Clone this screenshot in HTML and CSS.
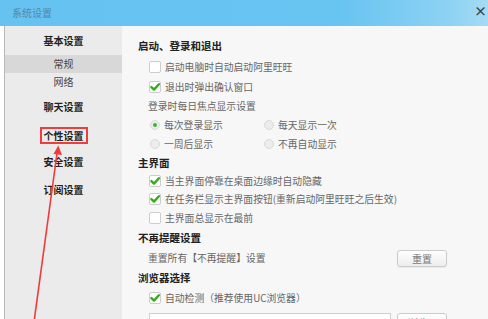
FILE: index.html
```html
<!DOCTYPE html>
<html lang="zh-CN">
<head>
<meta charset="utf-8">
<title>系统设置</title>
<link rel="stylesheet" href="styles.css">
</head>
<body>
<div class="window">
  <header class="titlebar">
    <span class="title">系统设置</span>
    <span class="close">×</span>
  </header>
  <div class="main">
    <div class="gutter"></div>
    <nav class="sidebar">
      <div class="nav-head first">基本设置</div>
      <div class="nav-sub active">常规</div>
      <div class="nav-sub short">网络</div>
      <div class="nav-head chat">聊天设置</div>
      <div class="nav-head"><span class="marked">个性设置</span></div>
      <div class="nav-head">安全设置</div>
      <div class="nav-head">订阅设置</div>
    </nav>
    <section class="content">
      <div class="sec">启动、登录和退出</div>
      <div class="row tall"><span class="cb"></span>启动电脑时自动启动阿里旺旺</div>
      <div class="row"><span class="cb on"><svg viewBox="0 0 12 12"><path d="M2.4 6.1 L5 8.6 L9.9 3.2"/></svg></span>退出时弹出确认窗口</div>
      <div class="row label">登录时每日焦点显示设置</div>
      <div class="row radios">
        <span class="ropt"><span class="rd on"></span>每次登录显示</span>
        <span class="ropt"><span class="rd"></span>每天显示一次</span>
      </div>
      <div class="row radios">
        <span class="ropt"><span class="rd"></span>一周后显示</span>
        <span class="ropt"><span class="rd"></span>不再自动显示</span>
      </div>

      <div class="sec s19">主界面</div>
      <div class="row tight"><span class="cb on"><svg viewBox="0 0 12 12"><path d="M2.4 6.1 L5 8.6 L9.9 3.2"/></svg></span>当主界面停靠在桌面边缘时自动隐藏</div>
      <div class="row tight"><span class="cb on"><svg viewBox="0 0 12 12"><path d="M2.4 6.1 L5 8.6 L9.9 3.2"/></svg></span>在任务栏显示主界面按钮(重新启动阿里旺旺之后生效)</div>
      <div class="row loose"><span class="cb"></span>主界面总显示在最前</div>

      <div class="sec">不再提醒设置</div>
      <div class="row loose reset"><span class="label-text">重置所有【不再提醒】设置</span><button class="btn">重置</button></div>

      <div class="sec">浏览器选择</div>
      <div class="row"><span class="cb on"><svg viewBox="0 0 12 12"><path d="M2.4 6.1 L5 8.6 L9.9 3.2"/></svg></span>自动检测（推荐使用UC浏览器）</div>
      <div class="pick">
        <div class="field"></div>
        <button class="btn">浏览...</button>
      </div>
    </section>
  </div>
  <svg class="annot" viewBox="0 0 488 319" width="488" height="319">
    <line x1="57.2" y1="152" x2="34" y2="322" stroke="#f23a3a" stroke-width="1.6"/>
    <polygon points="58.3,145.5 62,155 53.5,154" fill="#f23a3a"/>
  </svg>
</div>
</body>
</html>
```

FILE: styles.css
```css
* { box-sizing: border-box; }
html, body { margin: 0; padding: 0; }
body {
  width: 488px;
  height: 319px;
  overflow: hidden;
  background: #ffffff;
  font-family: "Noto Sans CJK SC", "Noto Sans", sans-serif;
  font-size: 10px;
  color: #666;
}
.window {
  position: relative;
  width: 488px;
  height: 319px;
  overflow: hidden;
  display: flex;
  flex-direction: column;
}
.titlebar {
  height: 26px;
  flex: none;
  display: flex;
  align-items: center;
  justify-content: space-between;
  padding-left: 12px;
  padding-right: 1px;
  background: linear-gradient(90deg, #66c3f1 0%, #68c4f1 70%, #8dd2f3 92%, #a5dbf4 100%);
}
.title {
  font-size: 10px;
  color: #4f88ad;
  line-height: 12px;
  margin-top: -1px;
}
.close {
  font-size: 13px;
  font-weight: bold;
  color: #3a4550;
  line-height: 14px;
  margin-top: -5px;
  white-space: nowrap;
}
.main {
  flex: 1;
  display: flex;
  min-height: 0;
}
.gutter {
  width: 5px;
  flex: none;
  background: #fff;
  border-right: 1px solid #b9b9b9;
}
.sidebar {
  width: 117px;
  flex: none;
  background: #ebebeb;
  padding-top: 5px;
  display: flex;
  flex-direction: column;
}
.nav-head {
  height: 20px;
  line-height: 20px;
  margin-top: 7.5px;
  text-align: center;
  font-weight: bold;
  color: #222;
  font-size: 10px;
}
.nav-head.first { margin-top: 0; }
.nav-head.chat { margin-top: 7px; }
.nav-sub {
  height: 18px;
  line-height: 18px;
  text-align: center;
  color: #444;
  font-size: 10px;
}
.nav-sub.active {
  margin-top: 4px;
  background: #d8d8d8;
}
.nav-sub.short { height: 17px; line-height: 17px; }
.marked {
  display: inline-block;
  border: 2px solid #f03c3c;
  padding: 0 2px;
  line-height: 13px;
  height: 17px;
  vertical-align: top;
  margin-top: 2px;
}
.content {
  flex: 1;
  background: #f7f7f7;
  padding: 10px 41px 0 16px;
  display: flex;
  flex-direction: column;
}
.sec {
  height: 20px;
  line-height: 20px;
  font-weight: bold;
  color: #222;
  font-size: 10.5px;
  flex: none;
}
.sec.s19 { height: 19px; line-height: 19px; }
.row {
  height: 19px;
  flex: none;
  display: flex;
  align-items: center;
  padding-left: 11px;
  white-space: nowrap;
  font-size: 9.8px;
}
.row.tall { height: 21px; }
.row.tight { height: 18px; }
.row.loose { height: 20px; }
.row.label { padding-left: 10px; }
.cb {
  width: 12px;
  height: 12px;
  flex: none;
  margin-right: 4px;
  border: 1px solid #cdcdcd;
  border-radius: 2px;
  background: #fff;
  display: flex;
  align-items: center;
  justify-content: center;
}
.cb svg { width: 12px; height: 12px; display: block; margin: -1px; }
.cb svg path {
  fill: none;
  stroke: #38ab1f;
  stroke-width: 2.4;
  stroke-linecap: round;
  stroke-linejoin: round;
}
.radios { padding-left: 11px; }
.ropt {
  width: 114px;
  display: flex;
  align-items: center;
}
.rd {
  width: 10px;
  height: 10px;
  flex: none;
  margin-left: 1px;
  margin-right: 4px;
  border-radius: 50%;
  border: 1px solid #dadada;
  background: #ececec;
  display: flex;
  align-items: center;
  justify-content: center;
}
.rd.on::after {
  content: "";
  width: 4px;
  height: 4px;
  border-radius: 50%;
  background: #3bb532;
}
.reset { justify-content: space-between; padding-left: 10px; }
.btn {
  width: 50px;
  height: 17px;
  padding: 0;
  border: 1px solid #cbcbcb;
  border-radius: 3px;
  background: linear-gradient(#fefefe, #ededed);
  box-shadow: 0 1px 1px rgba(0,0,0,0.06);
  font-family: inherit;
  font-size: 10px;
  color: #7a7a7a;
  line-height: 15px;
}
.pick {
  margin-top: 6px;
  padding-left: 11px;
  display: flex;
  gap: 6px;
  flex: none;
}
.field {
  width: 242px;
  height: 22px;
  background: #fff;
  border: 1px solid #cfcfcf;
}
.pick .btn { height: 22px; line-height: 18px; padding-bottom: 2px; }
.annot {
  position: absolute;
  left: 0;
  top: 0;
  pointer-events: none;
}
```
